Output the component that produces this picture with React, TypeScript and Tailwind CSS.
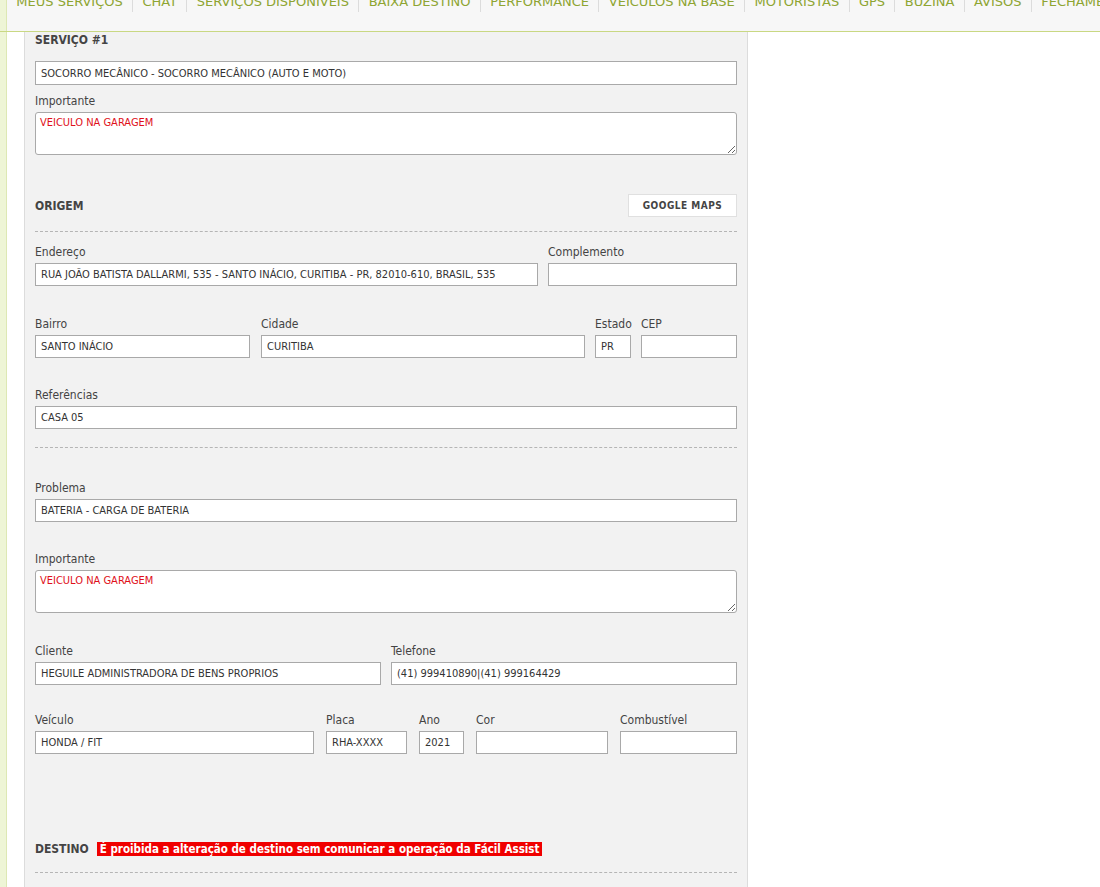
import React from 'react';

const font = "font-['DejaVu_Sans_Condensed','DejaVu_Sans',sans-serif]";

const navItems = [
  'MEUS SERVIÇOS',
  'CHAT',
  'SERVIÇOS DISPONÍVEIS',
  'BAIXA DESTINO',
  'PERFORMANCE',
  'VEÍCULOS NA BASE',
  'MOTORISTAS',
  'GPS',
  'BUZINA',
  'AVISOS',
  'FECHAMENTO',
];

const Label: React.FC<{ children: React.ReactNode }> = ({ children }) => (
  <div className="text-[12px] leading-[15px] text-[#444] mb-[3px] whitespace-nowrap">{children}</div>
);

const Field: React.FC<{ label: string; value?: string; className?: string }> = ({ label, value = '', className = '' }) => (
  <div className={className}>
    <Label>{label}</Label>
    <input
      readOnly
      value={value}
      className="block w-full h-[23px] bg-white border border-[#a9a9a9] px-[5px] text-[11px] text-[#333] outline-none"
    />
  </div>
);

const Note: React.FC<{ label: string; value: string }> = ({ label, value }) => (
  <div>
    <Label>{label}</Label>
    <textarea
      readOnly
      value={value}
      className="block w-full h-[43px] bg-white border border-[#a9a9a9] rounded-[3px] px-[4px] py-[3px] text-[11px] leading-[14px] text-[#e0101a] outline-none"
    />
  </div>
);

const Dashed = ({ className = '' }: { className?: string }) => (
  <div className={`border-t border-dashed border-[#b5b5b5] ${className}`}></div>
);

export default function App() {
  return (
    <div className={`${font} min-h-screen bg-white overflow-hidden`}>
      {/* Top menu */}
      <div className="flex h-[32px] bg-[#f7f7f7] border-b border-[#c9d883] overflow-hidden">
        <div className="w-[7px] shrink-0 bg-[#eef5d6] border-r border-[#dde8b4]"></div>
        <div className="flex -mt-[6px] whitespace-nowrap font-['DejaVu_Sans',sans-serif]">
          {navItems.map((item, i) => (
            <div
              key={item}
              className={`h-[18px] px-[9.35px] text-[13px] leading-[15px] text-[#8ea532] ${i > 0 ? 'border-l border-[#dcdcdc]' : ''}`}
            >
              {item}
            </div>
          ))}
        </div>
      </div>

      <div className="flex">
        <div className="w-[7px] shrink-0 bg-[#eef5d6] border-r border-[#dde8b4] min-h-[856px]"></div>
        <div className="ml-[17px] w-[724px] bg-[#f2f2f2] border-x border-[#dcdcdc] px-[10px] pb-[20px]">
          <div className="pt-[1px] text-[12px] leading-[15px] font-bold text-[#444]">SERVIÇO #1</div>
          <input
            readOnly
            value="SOCORRO MECÂNICO - SOCORRO MECÂNICO (AUTO E MOTO)"
            className="block mt-[13px] w-full h-[24px] bg-white border border-[#a9a9a9] px-[5px] text-[11px] text-[#333] outline-none"
          />
          <div className="mt-[9px]">
            <Note label="Importante" value="VEICULO NA GARAGEM" />
          </div>

          {/* Origem */}
          <div className="mt-[39px] h-[23px] flex items-center justify-between">
            <div className="text-[12px] font-bold text-[#444]">ORIGEM</div>
            <button className="h-[23px] w-[109px] bg-white border border-[#e0e0e0] text-[10px] font-bold tracking-[0.5px] text-[#444]">
              GOOGLE MAPS
            </button>
          </div>
          <Dashed className="mt-[14px]" />

          <div className="mt-[13px] flex gap-[10px]">
            <Field className="w-[503px]" label="Endereço" value="RUA JOÃO BATISTA DALLARMI, 535 - SANTO INÁCIO, CURITIBA - PR, 82010-610, BRASIL, 535" />
            <Field className="flex-1" label="Complemento" />
          </div>

          <div className="mt-[31px] flex">
            <Field className="w-[215px]" label="Bairro" value="SANTO INÁCIO" />
            <Field className="w-[324px] ml-[11px]" label="Cidade" value="CURITIBA" />
            <Field className="w-[36px] ml-[10px]" label="Estado" value="PR" />
            <Field className="flex-1 ml-[10px]" label="CEP" />
          </div>

          <div className="mt-[30px]">
            <Field label="Referências" value="CASA 05" />
          </div>
          <Dashed className="mt-[18px]" />

          <div className="mt-[33px]">
            <Field label="Problema" value="BATERIA - CARGA DE BATERIA" />
          </div>

          <div className="mt-[30px]">
            <Note label="Importante" value="VEICULO NA GARAGEM" />
          </div>

          <div className="mt-[31px] flex gap-[10px]">
            <Field className="w-[346px]" label="Cliente" value="HEGUILE ADMINISTRADORA DE BENS PROPRIOS" />
            <Field className="flex-1" label="Telefone" value="(41) 999410890|(41) 999164429" />
          </div>

          <div className="mt-[28px] flex">
            <Field className="w-[279px]" label="Veículo" value="HONDA / FIT" />
            <Field className="w-[81px] ml-[12px]" label="Placa" value="RHA-XXXX" />
            <Field className="w-[45px] ml-[12px]" label="Ano" value="2021" />
            <Field className="w-[132px] ml-[12px]" label="Cor" />
            <Field className="flex-1 ml-[12px]" label="Combustível" />
          </div>

          {/* Destino */}
          <div className="mt-[88px] flex items-center h-[14px]">
            <div className="text-[12px] font-bold text-[#444]">DESTINO</div>
            <span className="ml-[8px] bg-[#f00000] text-white text-[11.5px] leading-[14px] font-bold px-[3px]">
              É proibida a alteração de destino sem comunicar a operação da Fácil Assist
            </span>
          </div>
          <Dashed className="mt-[16px]" />
        </div>
      </div>
    </div>
  );
}
